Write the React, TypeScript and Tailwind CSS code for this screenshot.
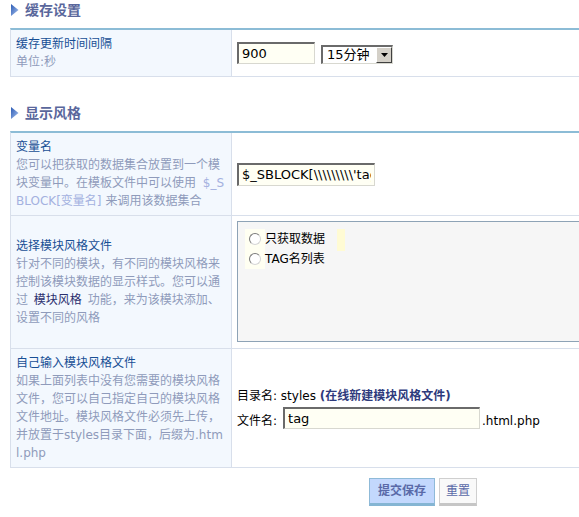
import React from 'react';

const FONT = "font-[family-name:'DejaVu_Sans','Noto_Sans_CJK_SC',sans-serif]";

function Heading({ title }: { title: string }) {
  return (
    <div className="flex items-center h-[20px] pl-[1px]">
      <svg width="8" height="12" viewBox="0 0 8 12">
        <defs>
          <linearGradient id={`tri-${title}`} x1="0" y1="0" x2="1" y2="1">
            <stop offset="0" stopColor="#2a5ab4" />
            <stop offset="1" stopColor="#a9c3ef" />
          </linearGradient>
        </defs>
        <polygon points="0,0 7.5,6 0,12" fill={`url(#tri-${title})`} />
      </svg>
      <span className="ml-[6px] text-[14px] font-bold leading-[20px] text-[#5a679c]">{title}</span>
    </div>
  );
}

function Label({ title, children }: { title: string; children: React.ReactNode }) {
  return (
    <div className="w-[221px] shrink-0 bg-[#f3f8fe] border-r border-[#d8dfeb] p-[5px] flex flex-col justify-center text-[12px] leading-[18px] break-all">
      <div className="text-[#184f95]">{title}</div>
      <div className="text-[#8f9bbb]">{children}</div>
    </div>
  );
}

function Row({ children }: { children: React.ReactNode }) {
  return <div className="flex border-b border-[#d8dfeb]">{children}</div>;
}

function Radio({ label }: { label: string }) {
  return (
    <div className="flex items-center h-[20px]">
      <span className="w-[20px] h-[20px] bg-[#fffff2] flex items-center justify-center">
        <span className="w-[12px] h-[12px] rounded-full border border-t-[#7a7a7a] border-l-[#7a7a7a] border-b-[#d6d6d6] border-r-[#d6d6d6] bg-white" />
      </span>
      <span className="text-[12px] text-black">{label}</span>
    </div>
  );
}

const inputCls =
  'h-[22px] border-t-2 border-l-2 border-t-[#6a6a6a] border-l-[#6a6a6a] border-b border-r border-b-[#d8d8d0] border-r-[#d8d8d0] bg-[#fffff4] px-[3px] text-[13px] text-black outline-none';

export default function App() {
  return (
    <div className={`w-[579px] h-[517px] overflow-hidden bg-white pl-[10px] ${FONT}`}>
      <Heading title="缓存设置" />

      <div className="mt-[8px] w-[640px] border-t-2 border-t-[#8cbcd6] border-l border-l-[#d8dfeb]">
        <Row>
          <Label title="缓存更新时间间隔">单位:秒</Label>
          <div className="flex-1 px-[5px] flex items-center">
            <div className="flex items-end gap-[6px]">
              <input readOnly value="900" className={`w-[78px] ${inputCls}`} />
              <div className="w-[72px] h-[19px] flex items-center border-t-2 border-l-2 border-t-[#6a6a6a] border-l-[#6a6a6a] border-b border-r border-b-[#d8d8d0] border-r-[#d8d8d0] bg-white">
                <span className="flex-1 pl-[4px] text-[13px] leading-[16px] text-black">15分钟</span>
                <span className="w-[16px] h-[16px] bg-[#d4d0c8] border border-t-white border-l-white border-b-[#404040] border-r-[#404040] flex items-center justify-center">
                  <svg width="7" height="4" viewBox="0 0 7 4">
                    <polygon points="0,0 7,0 3.5,4" fill="#000" />
                  </svg>
                </span>
              </div>
            </div>
          </div>
        </Row>
      </div>

      <div className="mt-[26px]">
        <Heading title="显示风格" />
      </div>

      <div className="mt-[8px] w-[640px] border-t-2 border-t-[#8cbcd6] border-l border-l-[#d8dfeb]">
        <Row>
          <Label title="变量名">
            您可以把获取的数据集合放置到一个模块变量中。在模板文件中可以使用 <span className="pl-[3px] text-[#a3b1e0]">$_SBLOCK[变量名]</span> 来调用该数据集合
          </Label>
          <div className="flex-1 px-[5px] flex items-center">
            <input
              readOnly
              value={"$_SBLOCK[\\\\\\\\\\\\\\\\\\'tag\\\\\\\\\\\\\\\\\\']"}
              className={`w-[138px] !h-[23px] ${inputCls}`}
            />
          </div>
        </Row>

        <Row>
          <Label title="选择模块风格文件">
            针对不同的模块，有不同的模块风格来控制该模块数据的显示样式。您可以通过 <span className="px-[2px] text-[#2b2f6e]">模块风格</span> 功能，来为该模块添加、设置不同的风格
          </Label>
          <div className="flex-1 pl-[5px] pt-[5px] pb-[6px]">
            <div className="h-[121px] border border-[#8ea3b6] bg-[#f6f6f6] pt-[7px] pl-[7px]">
              <div className="relative">
                <Radio label="只获取数据" />
                <span className="absolute left-[92px] top-0 w-[8px] h-[22px] bg-[#fffbd4]" />
              </div>
              <Radio label="TAG名列表" />
            </div>
          </div>
        </Row>

        <Row>
          <Label title="自己输入模块风格文件">
            如果上面列表中没有您需要的模块风格文件，您可以自己指定自己的模块风格文件地址。模块风格文件必须先上传，并放置于styles目录下面，后缀为.html.php
          </Label>
          <div className="flex-1 px-[5px] flex flex-col justify-center text-[12px] text-black">
            <div className="leading-[18px]">
              目录名: styles <span className="font-bold text-[#2e3a7c]">(在线新建模块风格文件)</span>
            </div>
            <div className="mt-[2px] flex items-end">
              <span className="leading-[16px]">文件名:</span>
              <input readOnly value="tag" className={`ml-[6px] w-[197px] ${inputCls}`} />
              <span className="ml-[2px] leading-[16px]">.html.php</span>
            </div>
          </div>
        </Row>
      </div>

      <div className="mt-[10px] pl-[359px] flex gap-[4px]">
        <button className="w-[66px] h-[28px] bg-[#c3d8fd] border border-[#8fbad8] border-b-[3px] border-b-[#85b5d3] text-[12px] font-bold text-[#5a6aa8] flex items-center justify-center">
          提交保存
        </button>
        <button className="w-[38px] h-[28px] bg-[#f9f9f9] border border-[#cfcfcf] border-b-[3px] border-b-[#c6c6c6] text-[12px] text-[#5a6aa8] flex items-center justify-center">
          重置
        </button>
      </div>
    </div>
  );
}
